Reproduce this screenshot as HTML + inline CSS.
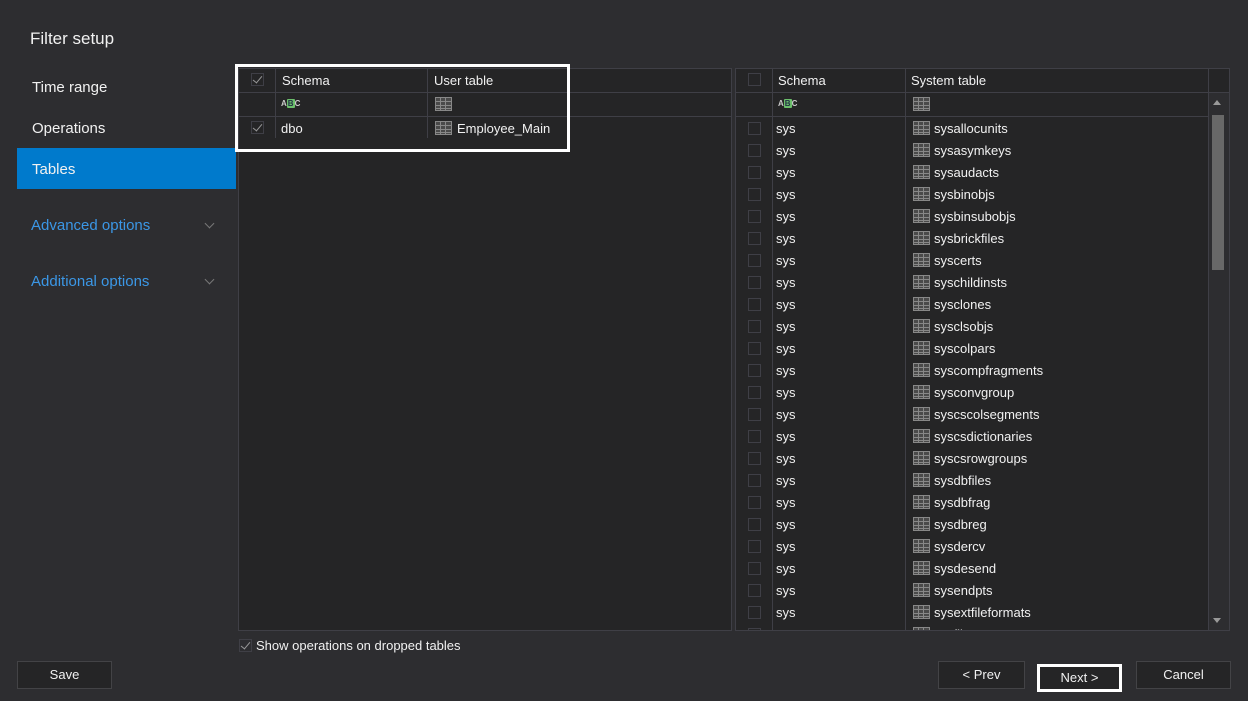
<!DOCTYPE html>
<html><head><style>
*{box-sizing:border-box;margin:0;padding:0}
body{width:1248px;height:701px;background:#2d2d30;font-family:"Liberation Sans",sans-serif;color:#f1f1f1;position:relative;overflow:hidden}
.a{position:absolute}
.title{left:30px;top:29px;font-size:17px}
.nav{left:32px;font-size:15px;color:#f1f1f1}
.sel{left:17px;top:148px;width:219px;height:41px;background:#007acc}
.blue{color:#3b97e6;font-size:15px}
.chev{width:7px;height:7px;border-right:1.5px solid #777;border-bottom:1.5px solid #777;transform:rotate(45deg)}
.grid{background:#252526;border:1px solid #3f3f46}
.vl{position:absolute;top:0;width:1px;background:#3f3f46}
.hl{position:absolute;left:0;height:1px;background:#3f3f46}
.t{position:absolute;font-size:13px;color:#f1f1f1;white-space:nowrap}
.cb{position:absolute;width:13px;height:13px;border:1px solid #3f3f46;background:#252526}
.ck::after{content:"";position:absolute;left:3px;top:0px;width:4px;height:8px;border-right:1.5px solid #999;border-bottom:1.5px solid #999;transform:rotate(40deg)}
.ti{position:absolute;width:17px;height:14px;border:1px solid #888;background:
linear-gradient(#888,#888) 0 3px/100% 1px no-repeat,
linear-gradient(#888,#888) 0 7px/100% 1px no-repeat,
linear-gradient(#888,#888) 0 10px/100% 1px no-repeat,
linear-gradient(#888,#888) 4px 0/1px 100% no-repeat,
linear-gradient(#888,#888) 9px 0/1px 100% no-repeat,#4a4a4a}
.abc{position:absolute;font-size:8px;font-weight:bold;color:#ccc;letter-spacing:0}
.abc b{background:#6cbf6c;color:#234;padding:0 1px;border-radius:1px}
.btn{position:absolute;height:28px;border:1px solid #434346;background:#252526;font-size:13px;text-align:center;line-height:26px}
</style></head><body>
<div class="a title">Filter setup</div>
<div class="a nav" style="top:79px">Time range</div>
<div class="a nav" style="top:120px">Operations</div>
<div class="a sel"></div>
<div class="a nav" style="top:161px">Tables</div>
<div class="a blue" style="left:31px;top:217px">Advanced options</div>
<div class="a chev" style="left:206px;top:220px"></div>
<div class="a blue" style="left:31px;top:273px">Additional options</div>
<div class="a chev" style="left:206px;top:276px"></div>

<div class="a grid" style="left:238px;top:68px;width:494px;height:563px">
<div class="hl" style="top:23px;width:100%"></div>
<div class="hl" style="top:47px;width:100%"></div>
<div class="vl" style="left:36px;height:69px"></div>
<div class="vl" style="left:188px;height:69px"></div>
<div class="cb ck" style="left:12px;top:4px"></div>
<div class="t" style="left:43px;top:4px">Schema</div>
<div class="t" style="left:195px;top:4px">User table</div>
<div class="abc" style="left:42px;top:30px">A<b>B</b>C</div>
<div class="ti" style="left:196px;top:28px"></div>
<div class="cb ck" style="left:12px;top:52px"></div>
<div class="t" style="left:42px;top:52px">dbo</div>
<div class="ti" style="left:196px;top:52px"></div>
<div class="t" style="left:218px;top:52px">Employee_Main</div>
</div>
<div class="a" style="left:235px;top:64px;width:335px;height:88px;border:3px solid #fff"></div>

<div class="a grid" style="left:735px;top:68px;width:495px;height:563px;overflow:hidden">
<div class="hl" style="top:23px;width:100%"></div>
<div class="hl" style="top:47px;width:472px"></div>
<div class="vl" style="left:36px;height:100%"></div>
<div class="vl" style="left:169px;height:100%"></div>
<div class="vl" style="left:472px;height:100%"></div>
<div class="a" style="left:473px;top:24px;width:21px;height:540px;background:#2d2d30"></div>
<div class="a" style="left:476px;top:46px;width:12px;height:155px;background:#686868"></div>
<div class="a" style="left:477px;top:31px;border:4px solid transparent;border-bottom:5px solid #999;border-top:0"></div>
<div class="a" style="left:477px;top:549px;border:4px solid transparent;border-top:5px solid #999;border-bottom:0"></div>
<div class="cb" style="left:12px;top:4px"></div>
<div class="t" style="left:42px;top:4px">Schema</div>
<div class="t" style="left:175px;top:4px">System table</div>
<div class="abc" style="left:42px;top:30px">A<b>B</b>C</div>
<div class="ti" style="left:177px;top:28px"></div>
<div id="rows"></div>
</div>
<script>
var n=["sysallocunits","sysasymkeys","sysaudacts","sysbinobjs","sysbinsubobjs","sysbrickfiles","syscerts","syschildinsts","sysclones","sysclsobjs","syscolpars","syscompfragments","sysconvgroup","syscscolsegments","syscsdictionaries","syscsrowgroups","sysdbfiles","sysdbfrag","sysdbreg","sysdercv","sysdesend","sysendpts","sysextfileformats","sysfiles"];
var h="";n.forEach(function(s,i){var y=52+i*22;h+='<div class="cb" style="left:12px;top:'+(y+1)+'px"></div><div class="t" style="left:40px;top:'+y+'px">sys</div><div class="ti" style="left:177px;top:'+y+'px"></div><div class="t" style="left:198px;top:'+y+'px">'+s+'</div>';});
document.getElementById("rows").innerHTML=h;
</script>

<div class="cb ck" style="left:239px;top:639px;background:#2d2d30"></div>
<div class="t" style="left:256px;top:638px">Show operations on dropped tables</div>

<div class="btn" style="left:17px;top:661px;width:95px">Save</div>
<div class="btn" style="left:938px;top:661px;width:87px">&lt; Prev</div>
<div class="btn" style="left:1037px;top:664px;width:85px;border:3px solid #fff;line-height:22px">Next &gt;</div>
<div class="btn" style="left:1136px;top:661px;width:95px">Cancel</div>
</body></html>
